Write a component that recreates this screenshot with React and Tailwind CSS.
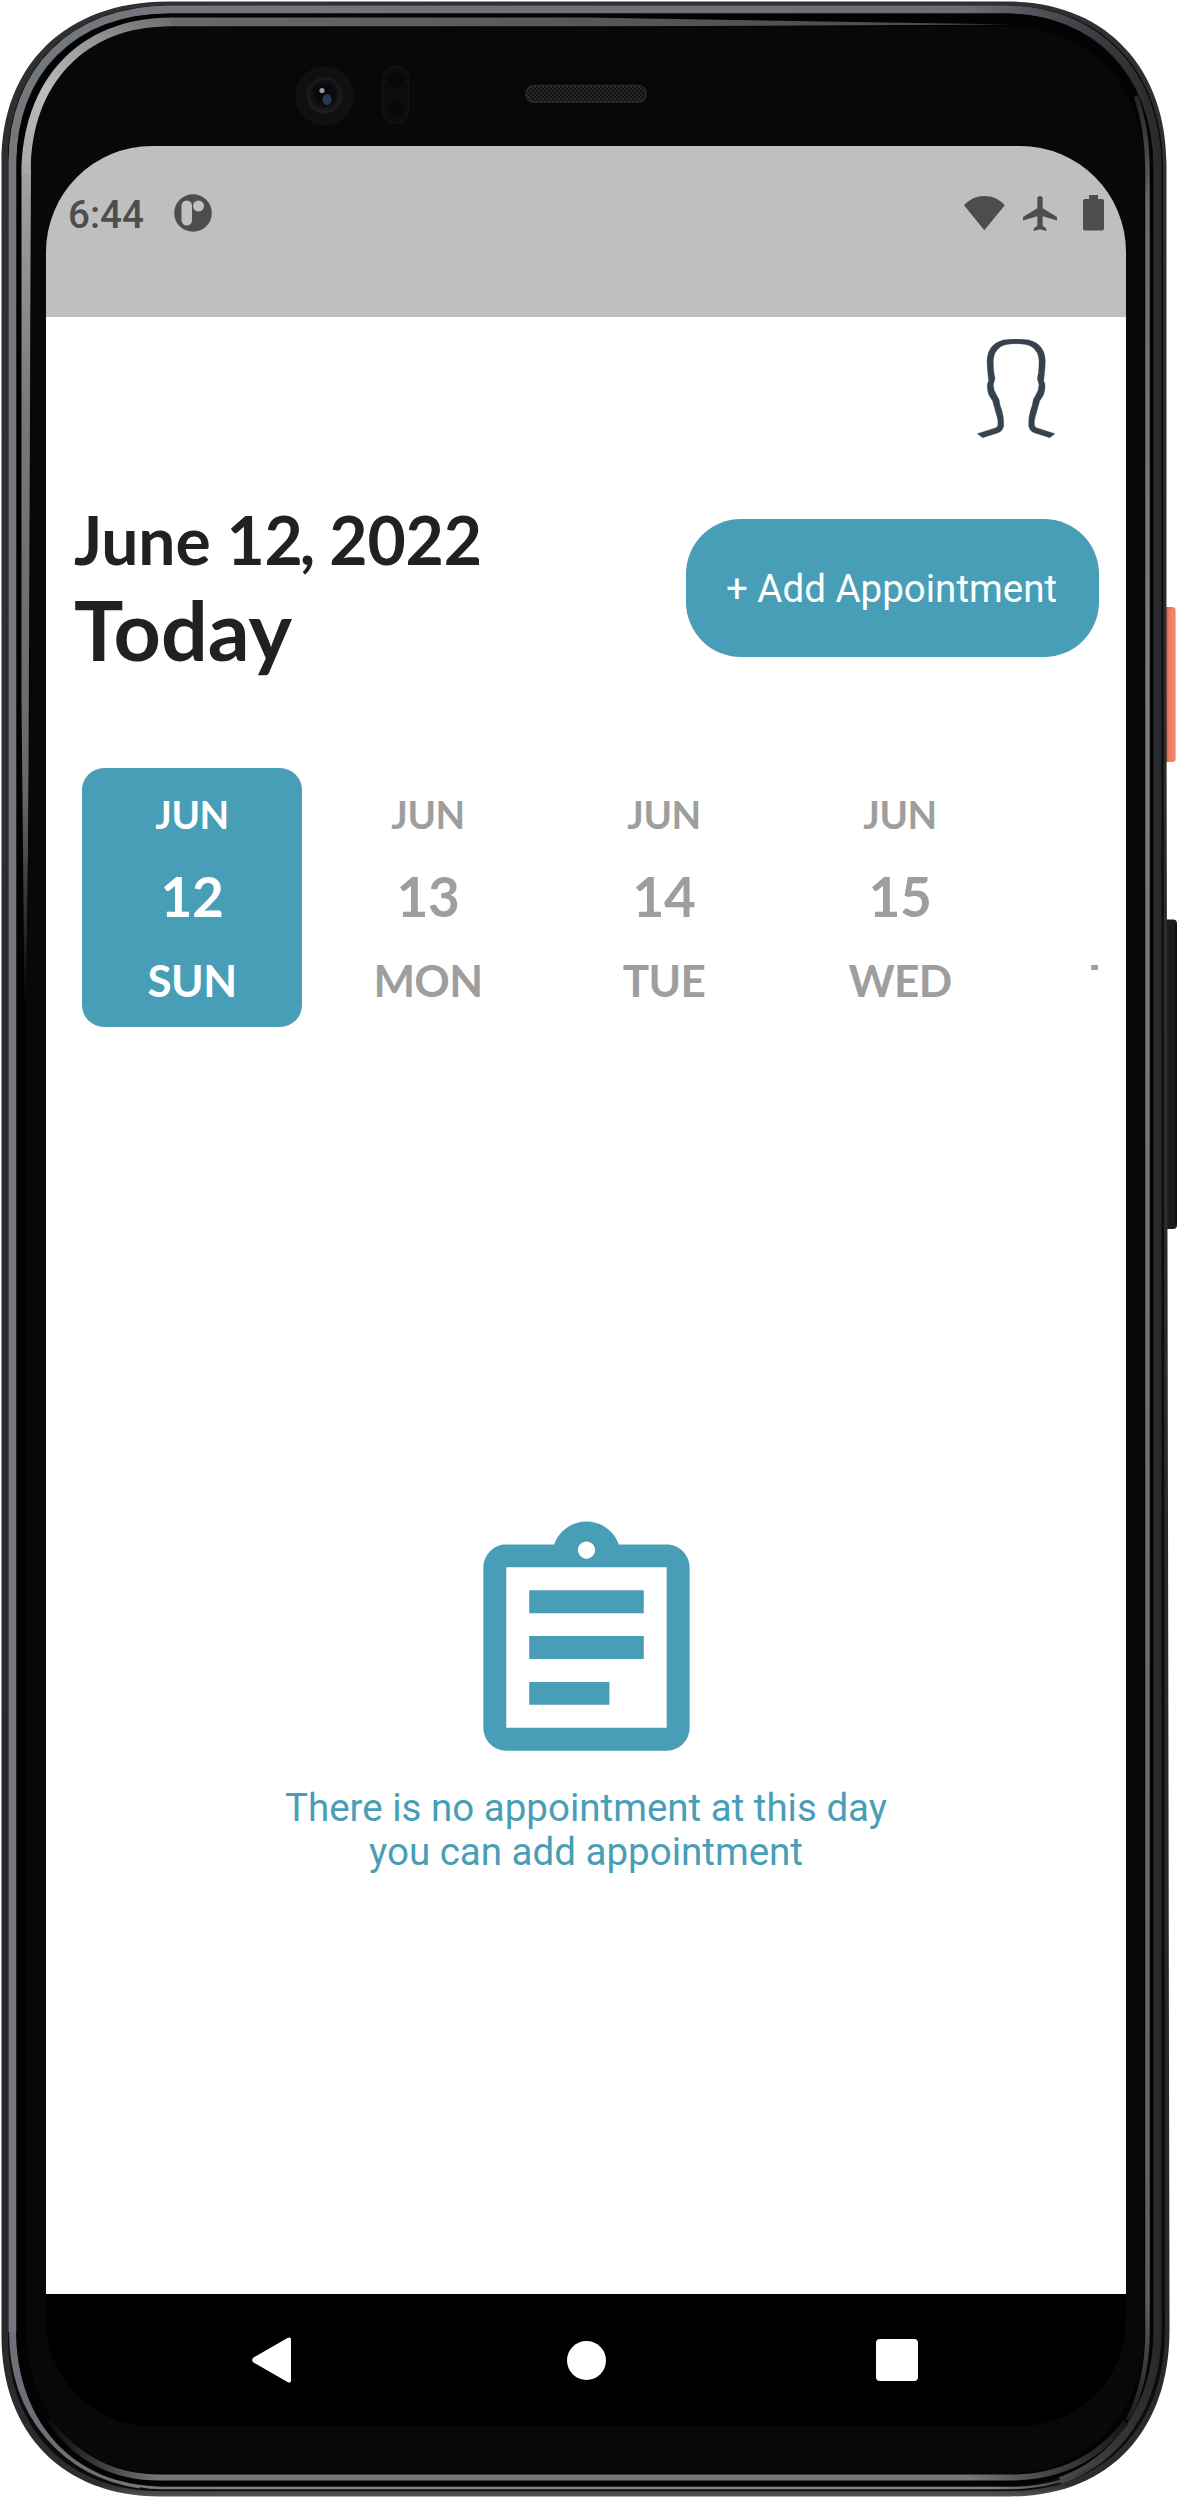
import React from 'react';

const days = [
  { month: 'JUN', day: '12', name: 'SUN', active: true },
  { month: 'JUN', day: '13', name: 'MON' },
  { month: 'JUN', day: '14', name: 'TUE' },
  { month: 'JUN', day: '15', name: 'WED' },
  { month: 'JUN', day: '16', name: 'THU' },
];

/* Phone hardware: side keys, metal rim, glass, camera and speaker. */
function PhoneBody() {
  return (
    <svg className="absolute inset-0" width="1178" height="2498" viewBox="0 0 1178 2498" fill="none" aria-hidden="true">
      <defs>
        <linearGradient id="rim" x1="0" y1="0" x2="1178" y2="0" gradientUnits="userSpaceOnUse">
          <stop offset="0" stopColor="#74777c" />
          <stop offset="0.82" stopColor="#6c6d75" />
          <stop offset="0.93" stopColor="#3c3d42" />
          <stop offset="1" stopColor="#212326" />
        </linearGradient>
        <linearGradient id="shineTop" x1="150" y1="0" x2="1020" y2="0" gradientUnits="userSpaceOnUse">
          <stop offset="0" stopColor="#6a6a6a" />
          <stop offset="0.5" stopColor="#575757" />
          <stop offset="1" stopColor="#4a4a4a" />
        </linearGradient>
        <linearGradient id="shineCorner" x1="30" y1="230" x2="190" y2="20" gradientUnits="userSpaceOnUse">
          <stop offset="0" stopColor="#9a9a9a" />
          <stop offset="0.45" stopColor="#bdbdbd" />
          <stop offset="1" stopColor="#696969" />
        </linearGradient>
        <linearGradient id="shineLeft" x1="0" y1="170" x2="0" y2="1000" gradientUnits="userSpaceOnUse">
          <stop offset="0" stopColor="#a2a2a2" />
          <stop offset="0.3" stopColor="#777777" />
          <stop offset="0.75" stopColor="#686868" />
          <stop offset="1" stopColor="#080808" />
        </linearGradient>
        <linearGradient id="shineRight" x1="0" y1="90" x2="0" y2="2440" gradientUnits="userSpaceOnUse">
          <stop offset="0" stopColor="#222222" />
          <stop offset="0.05" stopColor="#6a6a6a" />
          <stop offset="0.25" stopColor="#7c7c7c" />
          <stop offset="0.94" stopColor="#606060" />
          <stop offset="1" stopColor="#111111" />
        </linearGradient>
        <linearGradient id="shineBottom" x1="50" y1="0" x2="1130" y2="0" gradientUnits="userSpaceOnUse">
          <stop offset="0" stopColor="#0c0c0c" />
          <stop offset="0.1" stopColor="#777777" />
          <stop offset="0.85" stopColor="#777777" />
          <stop offset="1" stopColor="#141414" />
        </linearGradient>
        <linearGradient id="bottomLine" x1="60" y1="0" x2="1120" y2="0" gradientUnits="userSpaceOnUse">
          <stop offset="0" stopColor="#6d7076" />
          <stop offset="0.15" stopColor="#808281" />
          <stop offset="0.88" stopColor="#808281" />
          <stop offset="1" stopColor="#1a1a1a" />
        </linearGradient>
        <linearGradient id="powerKey" x1="1166" y1="0" x2="1177" y2="0" gradientUnits="userSpaceOnUse">
          <stop offset="0" stopColor="#c9543e" />
          <stop offset="0.2" stopColor="#e8735b" />
          <stop offset="0.7" stopColor="#ee8a72" />
          <stop offset="1" stopColor="#e4604a" />
        </linearGradient>
        <linearGradient id="body" x1="0" y1="0" x2="0" y2="2497" gradientUnits="userSpaceOnUse">
          <stop offset="0" stopColor="#2e3130" />
          <stop offset="0.9" stopColor="#262928" />
          <stop offset="0.995" stopColor="#2c2e2d" />
          <stop offset="1" stopColor="#555756" />
        </linearGradient>
        <radialGradient id="lens" cx="0.5" cy="0.45" r="0.6">
          <stop offset="0" stopColor="#050507" />
          <stop offset="0.5" stopColor="#0b0b0e" />
          <stop offset="1" stopColor="#262626" />
        </radialGradient>
        <pattern id="mesh" width="4" height="4" patternUnits="userSpaceOnUse">
          <rect width="4" height="4" fill="#111111" />
          <circle cx="1" cy="1" r="0.8" fill="#484848" />
          <circle cx="3" cy="3" r="0.8" fill="#484848" />
        </pattern>
      </defs>

      <rect x="1160" y="607" width="15.500" height="155" rx="3" fill="url(#powerKey)" />
      <rect x="1160" y="919.500" width="17" height="309.500" rx="4" fill="#1b1c1c" />
      <path d="M1176 924v300" stroke="#0a0a0a" strokeWidth="1.500" />

      <path d="M1.500 162C1.500 66 65 1.500 168 1.500H1008C1104 1.500 1166.500 66 1166.500 165V700L1169.500 2330C1169.500 2432 1108 2496.500 1010 2496.500H160C62 2496.500 1.500 2432 1.500 2336Z" fill="url(#body)" />
      <path d="M8 162C8 70 69 5.500 168 5.500H1008C1100 5.500 1163 70 1163 167L1165 2330C1165 2430 1100 2491 1010 2491H160C68 2491 8 2430 8 2336Z" fill="#0b0c0c" />
      <path d="M12.500 2332V162C12.500 73 71 9.500 170 9.500H1005C1096 9.500 1157.500 72 1157.500 168V2330C1157.500 2410 1114 2462 1060 2480" stroke="url(#rim)" strokeWidth="8" />
      <path d="M12.500 2331C12.500 2416 66 2474 140 2485" stroke="#6d7076" strokeWidth="7" />
      <path d="M110 2478C130 2485 146 2488 162 2488H1010C1040 2488 1068 2481 1092 2468" stroke="url(#bottomLine)" strokeWidth="2.500" />
      <path d="M16.500 165C16.500 78 74 13.500 170 13.500H1005C1092 13.500 1153 78 1153 168V2330C1153 2424 1090 2486 1008 2486H160C76 2486 16.500 2424 16.500 2332Z" fill="#030303" />

      <path d="M21.500 175C21.500 82 77 17.500 172 17.500V26.500C85 27.500 31 88 31 175Z" fill="url(#shineCorner)" />
      <path d="M171 17.500H588L1010 24.500L588 26.500H171Z" fill="url(#shineTop)" />
      <path d="M21.500 174.500H31L28.500 780L27 1000L24.500 1000L21.500 700Z" fill="url(#shineLeft)" />
      <path d="M1136 96C1143 116 1147.500 140 1147.500 170V2332C1147.500 2368 1140 2396 1128 2420" stroke="url(#shineRight)" strokeWidth="4.500" />
      <path d="M50 2420C76 2458 112 2477.500 160 2477.500H1010C1062 2477.500 1100 2456 1126 2422" stroke="url(#shineBottom)" strokeWidth="6" />
      <path d="M31 170C31 84 86 26.500 168 26.500H1005C1088 26.500 1144.500 84 1144.500 170V2330C1144.500 2418 1084 2474 1005 2474H162C80 2474 26 2414 26 2330V1000L30 700Z" fill="#080809" />

      <circle cx="324.500" cy="96" r="29.500" fill="#101010" />
      <circle cx="324.500" cy="95.500" r="17.500" fill="url(#lens)" stroke="#1e1e1e" />
      <ellipse cx="327" cy="99.500" rx="4.500" ry="5.500" fill="#2b3555" />
      <circle cx="322" cy="90.500" r="2.600" fill="#98989c" />
      <rect x="383" y="66.500" width="25.500" height="57" rx="12.500" fill="#0d0d0e" stroke="#131314" strokeWidth="1.500" />
      <circle cx="396" cy="79.500" r="9" fill="#080809" stroke="#121213" />
      <circle cx="396" cy="108.500" r="9" fill="#080809" stroke="#121213" />
      <rect x="526" y="85.500" width="120" height="16.500" rx="8" fill="url(#mesh)" stroke="#2c2c2c" strokeWidth="1.500" />
    </svg>
  );
}

function StatusBar() {
  return (
    <div className="flex h-[171px] shrink-0 items-start bg-[#bfbfbf] pt-[47px] pl-[22px] text-[#4d4d4d]">
      <span className="mt-[-1px] w-[106px] font-[Roboto,sans-serif] text-[38.5px] leading-[45px] font-medium">6:44</span>
      <svg className="mt-[1px]" width="38" height="38" viewBox="0 0 38 38">
        <circle cx="19" cy="19" r="18.800" fill="currentColor" />
        <rect x="7.500" y="6.500" width="10.500" height="25" rx="5.200" fill="#c1c1c1" />
        <circle cx="24.500" cy="12" r="5.500" fill="#c1c1c1" />
      </svg>
      <svg className="mt-[3px] ml-[752px]" width="41" height="35" viewBox="0 0 41 35" fill="currentColor">
        <path d="M20.300 34.200L0 9.300C11-3.100 30-3.100 40.800 9.300Z" />
      </svg>
      <svg className="mt-[3px] ml-[18px]" width="34" height="35" viewBox="2 2 19 20" preserveAspectRatio="none" fill="currentColor">
        <path d="M21 16v-2l-8-5V3.500c0-.83-.67-1.500-1.500-1.500S10 2.670 10 3.500V9l-8 5v2l8-2.500V19l-2 1.500V22l3.500-1 3.500 1v-1.500L13 19v-5.500l8 2.500z" />
      </svg>
      <svg className="mt-[2px] ml-[26px]" width="21" height="36" viewBox="0 0 21 36" fill="currentColor">
        <path d="M6 0h9v4h4a2 2 0 0 1 2 2v27.500a2 2 0 0 1-2 2H2a2 2 0 0 1-2-2V6a2 2 0 0 1 2-2h4z" />
      </svg>
    </div>
  );
}

const halfHead =
  'M112 341L168 323Q174 320 174 313Q175 300 168 280Q162 258 158 243Q143 225 142 205V192L146 182L144 165Q141 140 141 122Q143 72 190 60Q210 57 229 57V71Q195 71 182 80Q161 94 160 122Q160 145 162 160L165 175L160 195Q160 210 170 226L177 238Q179 255 185 270Q192 290 191 318Q188 334 175 338L128 353Z';

function ProfileIcon() {
  return (
    <svg width="80" height="100" viewBox="105 57 240 300" fill="#37424f" stroke="#37424f" strokeWidth="1">
      <path d={halfHead} />
      <path d={halfHead} transform="translate(457 0) scale(-1 1)" />
    </svg>
  );
}

function DateStrip() {
  return (
    <div className="mt-[111px] mr-[28px] ml-[36px] flex shrink-0 gap-4 overflow-hidden">
      {days.map((d) => (
        <div
          key={d.day}
          className={
            'flex h-[259px] w-[220px] shrink-0 flex-col items-center rounded-[22px] ' +
            (d.active ? 'bg-[#489eb7] text-white' : 'text-[#9e9e9e]')
          }
        >
          <span className="mt-[21px] text-[38.5px] leading-[50px] tracking-[-0.5px]">{d.month}</span>
          <span className="mt-[24px] text-[55px] leading-[66px] tracking-[-0.5px]">{d.day}</span>
          <span className="mt-[24px] text-[44px] leading-[54px] tracking-[-0.6px]">{d.name}</span>
        </div>
      ))}
    </div>
  );
}

function NavBar() {
  return (
    <div className="flex h-[132px] shrink-0 items-center bg-black text-white">
      <svg className="ml-[206px]" width="40" height="46" viewBox="0 0 40 46" fill="currentColor">
        <path d="M35.500 1C37.500-.2 39 .5 39 2.500V43.500C39 45.500 37.500 46.200 35.500 45L1.500 25.500C-.3 24 -.3 22 1.500 20.500Z" />
      </svg>
      <div className="ml-[275px] h-[39px] w-[39px] rounded-full bg-white" />
      <div className="ml-[270px] h-[42px] w-[42px] rounded-[4px] bg-white" />
    </div>
  );
}

export default function App() {
  return (
    <div className="relative flex h-[2498px] w-[1178px] overflow-hidden bg-white font-[Lato,sans-serif]">
      <PhoneBody />
      <main className="relative mt-[146px] ml-[46px] flex h-[2280px] w-[1080px] flex-col overflow-hidden rounded-[106px] font-bold">
        <StatusBar />
        <div className="flex flex-1 flex-col bg-white">
          <div className="flex h-[202px] shrink-0 justify-end pt-[22px] pr-[71px]">
            <ProfileIcon />
          </div>
          <div className="flex h-[138px] shrink-0 justify-between pr-[27px] pl-[28px]">
            <div className="flex flex-col text-[#212121]">
              <h1 className="mt-[-19px] text-[66px] leading-[80px] tracking-[-0.15px] whitespace-nowrap">
                June 12<span className="ml-[-3px]">,</span>
                <span className="ml-[-1.5px]"> 2022</span>
              </h1>
              <h2 className="text-[82.500px] leading-[99px]">Today</h2>
            </div>
            <button className="h-[138px] w-[413px] rounded-[55px] bg-[#489eb7] pt-[1px] pr-[2px] font-[Roboto,sans-serif] text-[38.5px] font-normal text-white">
              + Add Appointment
            </button>
          </div>
          <DateStrip />
          <div className="flex flex-1 flex-col items-center pt-[483px] text-center font-[Roboto,sans-serif] text-[38.5px] leading-[44px] font-normal text-[#489eb7]">
            <svg width="275" height="275" viewBox="0 0 24 24" fill="currentColor">
              <path d="M7 15h7v2H7zm0-4h10v2H7zm0-4h10v2H7zm12-4h-4.180C14.400 1.840 13.300 1 12 1c-1.300 0-2.400.84-2.820 2H5c-.14 0-.27.01-.4.04-.39.08-.74.28-1.010.55-.18.18-.33.4-.43.64-.1.23-.16.49-.16.77v14c0 .27.06.54.16.78s.25.45.43.64c.27.27.62.47 1.010.55.13.02.26.03.4.03h14c1.100 0 2-.9 2-2V5c0-1.100-.9-2-2-2zm-7-.25c.41 0 .75.34.75.75s-.34.75-.75.75-.75-.34-.75-.75.34-.75.75-.75zM19 19H5V5h14v14z" />
            </svg>
            <p className="mt-[1px]">
              There is no appointment at this day
              <br />
              you can add appointment
            </p>
          </div>
        </div>
        <NavBar />
      </main>
    </div>
  );
}
